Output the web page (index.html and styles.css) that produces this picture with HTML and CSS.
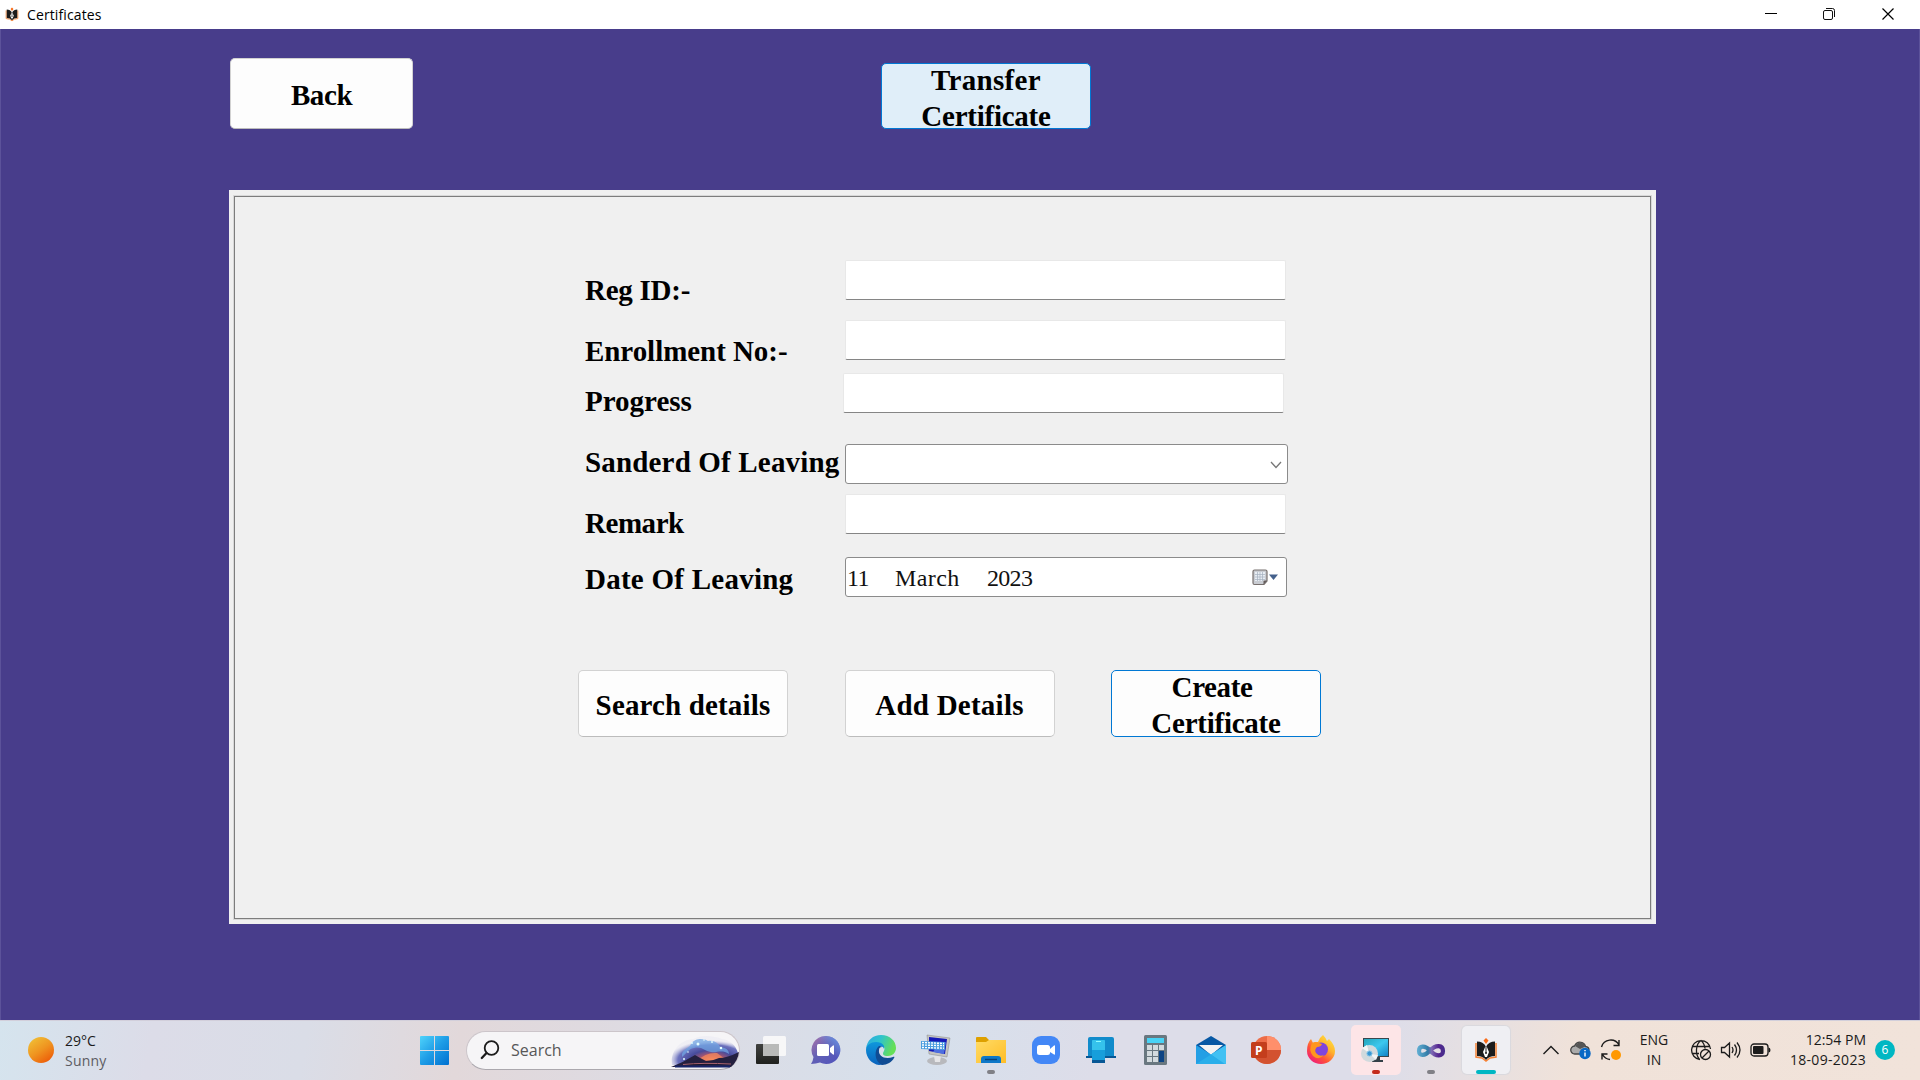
FILE: index.html
```html
<!DOCTYPE html>
<html lang="en">
<head>
<meta charset="utf-8">
<title>Certificates</title>
<link rel="stylesheet" href="styles.css">
</head>
<body>
<header class="titlebar">
  <svg class="app-icon" width="14" height="15" viewBox="0 0 24 24"><use href="#book"/></svg>
  <span class="title">Certificates</span>
  <div class="controls">
    <svg width="58" height="28" viewBox="0 0 58 28"><path d="M23 13.5h12" stroke="#000" stroke-width="1"/></svg>
    <svg width="58" height="28" viewBox="0 0 58 28" fill="none" stroke="#111"><rect x="23.5" y="10.5" width="9" height="9" rx="1.5"/><path d="M26 8.5h6.5a2 2 0 0 1 2 2v6.500"/></svg>
    <svg width="58" height="28" viewBox="0 0 58 28"><path d="M24.500 8.500l11 11M35.500 8.500l-11 11" stroke="#000" stroke-width="1.2"/></svg>
  </div>
</header>

<main class="window">
  <div class="top-buttons">
    <button class="btn back"><span class="t-back">Back</span></button>
    <button class="btn transfer"><span class="t-transfer">Transfer</span><span class="t-cert">Certificate</span></button>
  </div>
  <section class="panel">
    <div class="panel-inner">
      <form class="form">
        <div class="row r-reg"><label class="l-reg">Reg ID:-</label><div class="field"></div></div>
        <div class="row r-enr"><label class="l-enr">Enrollment No:-</label><div class="field"></div></div>
        <div class="row r-pro"><label class="l-pro">Progress</label><div class="field"></div></div>
        <div class="row r-std"><label class="l-std">Sanderd Of Leaving</label><div class="field select">
          <svg width="12" height="8" viewBox="0 0 12 8"><path d="M1 1l5 5.500 5-5.500" fill="none" stroke="#777" stroke-width="1.300"/></svg></div></div>
        <div class="row r-rem"><label class="l-rem">Remark</label><div class="field"></div></div>
        <div class="row r-dat"><label class="l-dat">Date Of Leaving</label><div class="field date">
          <span class="day">11</span><span class="month">March</span><span class="year">2023</span>
          <svg width="26" height="18" viewBox="0 0 26 18"><path d="M2.500 2h11a1.500 1.500 0 0 1 1.500 1.500V13l-3 3.500H2.500A1.500 1.500 0 0 1 1 15V3.500A1.500 1.500 0 0 1 2.500 2z" fill="#c9ccd2" stroke="#77706e" stroke-width="1.200"/><path d="M3 4h10v9H3z" fill="#e8edf3"/><path d="M3 6.500h10M3 9h10M3 11.500h10M5.500 4v9M8 4v9M10.500 4v9" stroke="#a5b0bf" stroke-width=".7"/><path d="M15 12.500l-3.500 4v-4z" fill="#645c5b"/><path d="M17 6.500h9L21.500 12z" fill="#44618c"/></svg></div></div>
      </form>
      <div class="actions">
        <button class="btn"><span class="t-search">Search details</span></button>
        <button class="btn"><span class="t-add">Add Details</span></button>
        <button class="btn create"><span class="t-create">Create</span><span class="t-cert">Certificate</span></button>
      </div>
    </div>
  </section>
</main>

<footer class="taskbar">
  <div class="weather">
    <span class="sun"></span>
    <div><div class="temp">29°C</div><div class="cond">Sunny</div></div>
  </div>
  <svg class="start" width="29" height="29" viewBox="0 0 29 29"><defs><linearGradient id="win" x1="0" y1="0" x2="1" y2="1"><stop offset="0" stop-color="#4fd3fb"/><stop offset=".5" stop-color="#1e9ce6"/><stop offset="1" stop-color="#0070d0"/></linearGradient></defs><path fill="url(#win)" d="M1 0h13v14H0V1a1 1 0 0 1 1-1zM15 0h13a1 1 0 0 1 1 1v13H15zM0 15h14v14H1a1 1 0 0 1-1-1zM15 15h14v13a1 1 0 0 1-1 1H15z"/></svg>
  <div class="search">
    <svg class="lens" width="20" height="20" viewBox="0 0 20 20"><circle cx="11.500" cy="8" r="6.800" fill="none" stroke="#1b1b1b" stroke-width="1.800"/><path d="M6.500 13L1.800 18" stroke="#1b1b1b" stroke-width="2.300" stroke-linecap="round"/></svg>
    <span>Search</span>
    <svg class="scene" width="68" height="34" viewBox="0 0 68 34"><defs>
      <radialGradient id="sky" cx=".6" cy=".8" r=".65"><stop offset="0" stop-color="#ff935b"/><stop offset=".22" stop-color="#bb5867"/><stop offset=".5" stop-color="#474b9b"/><stop offset=".78" stop-color="#6c72be"/><stop offset="1" stop-color="#c8c9e5" stop-opacity=".15"/></radialGradient></defs>
      <path d="M1 31C-1 17 9 6 22 5 31 0 44 2 51 5c9 1 14 7 16 14-1 7-4 10-8 13z" fill="url(#sky)"/><path d="M11 23C10 15 18 15 20 10c5-7 14-5 17-3 8-1 11 4 13 7 4-1 8 2 8 6-7-5-12-1-18-2-7-1-9-6-17-4-6 1-7 5-12 9z" fill="#72a6e3" opacity=".75"/><path d="M26 27q9-9 20-8l8 6z" fill="#f58a5c" opacity=".75"/><path d="M0 33q13-5 24-12 5 3 11 6 7 0 13-3 8 0 20-6-1 9-8 15z" fill="#24203f"/><path d="M12 30.500q20-2 48-.5" stroke="#a96370" stroke-width="1"/><path d="M4 32.500h55" stroke="#172468" stroke-width="2"/><g fill="#e5ffff"><circle cx="27" cy="10" r="1.500"/><circle cx="21" cy="9" r=".9"/><circle cx="33" cy="6" r=".8"/><circle cx="41" cy="8" r=".9"/><circle cx="50" cy="14" r="1.300"/><circle cx="17" cy="18" r=".8"/><circle cx="13" cy="25" r="1"/></g></svg>
  </div>
  <nav class="apps">
    <div class="app"><svg width="32" height="32" viewBox="0 0 32 32"><defs><linearGradient id="tv" x2="0" y2="1"><stop stop-color="#40413f"/><stop offset="1" stop-color="#20211e"/></linearGradient></defs><rect x="1" y="10" width="23" height="20" rx="1" fill="url(#tv)"/><rect x="8" y="2" width="23" height="20" rx="1.500" fill="#fafafa" opacity=".9"/><path d="M8 10h16v12H8z" fill="#b9bab9"/></svg></div>
    <div class="app"><svg width="32" height="32" viewBox="0 0 32 32"><defs><linearGradient id="chat" x2="1" y2="1"><stop stop-color="#b175aa"/><stop offset=".45" stop-color="#6260b5"/><stop offset="1" stop-color="#4f52bd"/></linearGradient><linearGradient id="chatb" x1="1" x2="0" y2="1"><stop stop-color="#699bea"/><stop offset=".45" stop-color="#699bea" stop-opacity="0"/></linearGradient></defs><path d="M16.500 2a14 14 0 1 1-6.500 26.500Q6 29.500 1 30q2-3 2.500-7A14 14 0 0 1 16.500 2z" fill="url(#chat)"/><path d="M16.500 2a14 14 0 1 1-6.500 26.500Q6 29.500 1 30q2-3 2.500-7A14 14 0 0 1 16.500 2z" fill="url(#chatb)"/><rect x="7" y="10" width="12" height="12" rx="1.500" fill="#fff"/><path d="M20 14l3-2.500q1-.5 1 .5v8q0 1-1 .5L20 18z" fill="#fff"/></svg></div>
    <div class="app"><svg width="32" height="32" viewBox="0 0 32 32"><defs><linearGradient id="ea" x2="1" y2=".3"><stop stop-color="#2ba8e3"/><stop offset=".5" stop-color="#2fc3cc"/><stop offset="1" stop-color="#65df57"/></linearGradient><linearGradient id="eb" x2="0" y2="1"><stop stop-color="#0e97dc"/><stop offset="1" stop-color="#0a62bd"/></linearGradient></defs><path d="M1 15C2 6 8 1 16 1c9 0 15 6 15 13 0 5-4 8-8 8-5 0-6-2-4-5 2-4-2-7-6-7C7 9 3 12 1 15z" fill="url(#ea)"/><path d="M1 16c0-5 5-8 10-8 7 0 9 4 8 7-1-3-4-3-5-1-3 6 2 14 9 14-3 2-6 3-9 3C7 30 1 24 1 16z" fill="url(#eb)"/><path d="M14 12c-5 4-5 15 3 19 5 0 10-3 12-7 1-1 0-1.500-1-1-8 3-15-1-14-7 0-2 1-3 3-3-1-1-2-1-3-1z" fill="#104c94"/></svg></div>
    <div class="app"><svg width="32" height="32" viewBox="0 0 32 32"><ellipse cx="17" cy="27" rx="10" ry="4" fill="#b8b9bd"/><path d="M14 22h7l-1 6h-5z" fill="#e5e5e7"/><path d="M7 1l23 3-3 19-18-3z" fill="#c5c5c2" stroke="#888" stroke-width=".5"/><path d="M9 3l18 2-2 15-16-3z" fill="#1419b7"/><path d="M16 13l10-5-2 12-11-2z" fill="#4c6ee0"/><path d="M1 7l24 1v8L1 15z" fill="#4a9ddf"/><path d="M2 8.500l22 1M2 11l22 .7M2 13.500l22 .7" stroke="#fff" stroke-width="1.400" stroke-dasharray="2 1"/></svg></div>
    <div class="app"><svg width="32" height="32" viewBox="0 0 32 32"><defs><linearGradient id="fold" x2="1" y2="1"><stop stop-color="#ffdb66"/><stop offset="1" stop-color="#ffbd26"/></linearGradient></defs><path d="M1 4q0-1 1-1h9l3 3h16q1 0 1 1v6H1z" fill="#dea000"/><path d="M1 8h10l3-2h17v23H1z" fill="url(#fold)"/><path d="M6 29v-4q0-3 3-3h14q3 0 3 3v4z" fill="#0f78c8"/><path d="M10 25.500h12" stroke="#09427a" stroke-width="1.400"/></svg><i class="dot"></i></div>
    <div class="app"><svg width="32" height="32" viewBox="0 0 32 32"><rect x="2" y="2" width="28" height="28" rx="9" fill="#4387f6"/><rect x="7" y="11" width="13" height="10" rx="2.500" fill="#fff"/><path d="M20 15l4-3.500q1-.5 1 .5v8q0 1-1 .5L20 18z" fill="#fff"/></svg></div>
    <div class="app"><svg width="32" height="32" viewBox="0 0 32 32"><path d="M3 5q0-2 2-2h22q2 0 2 2v18H3z" fill="#118bcb"/><path d="M1 22h30v2H1z" fill="#075795"/><rect x="7" y="6" width="13" height="23" rx="1" fill="#179edb"/><path d="M7 7q0-1 1-1h11q1 0 1 1v9H7z" fill="#35c2ec"/><path d="M7 26h13v3H7z" fill="#075795"/><path d="M11 7.500h5" stroke="#8efaff"/></svg></div>
    <div class="app"><svg width="32" height="32" viewBox="0 0 32 32"><rect x="4" y="1" width="23" height="30" rx="1.500" fill="#697780"/><rect x="7" y="4" width="17" height="5" fill="#48d3f6"/><g fill="#d3dade"><path d="M7 11h5v5H7zM13 11h5v5h-5zM19 11h5v5h-5zM7 17h5v5H7zM13 17h5v5h-5zM7 23h5v5H7zM13 23h5v5h-5z"/></g><path d="M19 17h5v11h-5z" fill="#0d4484"/></svg></div>
    <div class="app"><svg width="32" height="32" viewBox="0 0 32 32"><path d="M1 11L16 2l15 9v9H1z" fill="#0758a4"/><path d="M4 11h24L16 21z" fill="#f3f3f3"/><path d="M1 11l15 9.500L31 11v19H1z" fill="#239fe5"/><path d="M31 11L16 20.500 28 30h3z" fill="#42c1f3"/><path d="M1 30l15-9.500L30 30z" fill="#2aaeea"/></svg></div>
    <div class="app"><svg width="32" height="32" viewBox="0 0 32 32"><circle cx="17" cy="16" r="14" fill="#ed6c47"/><path d="M17 2a14 14 0 0 1 14 14H17z" fill="#ff8f6b"/><path d="M3 16h28a14 14 0 0 1-28 0z" fill="#d35230"/><rect x="1" y="8" width="16" height="16" rx="1.500" fill="#c43e1c"/><text x="5" y="20.500" class="ppt">P</text></svg></div>
    <div class="app"><svg width="32" height="32" viewBox="0 0 32 32"><defs><linearGradient id="ff" x1="1" x2=".2" y2="1"><stop stop-color="#fff04a"/><stop offset=".4" stop-color="#ffb52c"/><stop offset=".7" stop-color="#ff5238"/><stop offset="1" stop-color="#ed1881"/></linearGradient></defs><path d="M18 1q3 3 4 6l2-2q6 6 6 12a14 13 0 0 1-28 0Q2 9 6 5l2 4q3-1 5-1 2-5 5-7z" fill="url(#ff)"/><circle cx="16" cy="15.500" r="7" fill="#8045dc"/><path d="M7 9q4-2 7 0l3 1q-1 3-5 3-3 3-1 6 3 4 8 2-5 6-11 1Q3 16 7 9z" fill="#ff961e"/></svg></div>
    <div class="app alert"><svg width="32" height="32" viewBox="0 0 32 32"><defs><linearGradient id="pc" x2="1" y2="1"><stop stop-color="#24a6bb"/><stop offset=".5" stop-color="#3cc8ee"/><stop offset="1" stop-color="#1383c7"/></linearGradient></defs><path d="M3 4h26v19H3z" fill="#39464d"/><path d="M4 5h24v17H4z" fill="url(#pc)"/><path d="M14 23h6v3h3v2H12v-2h2z" fill="#344047"/><circle cx="9.500" cy="19.500" r="8.500" fill="#d1dadd"/><path d="M9 19l-7-5 5-3zM10 20l6 6 2-5z" fill="#f4f6f6"/><circle cx="9.500" cy="19.500" r="2.600" fill="#3b98d2" stroke="#87c6e8"/></svg><i class="dot red"></i></div>
    <div class="app"><svg width="32" height="32" viewBox="0 0 32 32"><defs><linearGradient id="vs" gradientUnits="userSpaceOnUse" x1="1" x2="31" y1="0" y2="0"><stop stop-color="#67b5d9"/><stop offset=".4" stop-color="#327ba6"/><stop offset=".52" stop-color="#7e69b4"/><stop offset=".75" stop-color="#54258f"/><stop offset="1" stop-color="#44308c"/></linearGradient></defs><path d="M4 17c0-5.500 6-6 11-.5 6 6.500 13 6.500 13 .5s-7-7-13-.5c-5 5.500-11 6-11 .5z" fill="none" stroke="url(#vs)" stroke-width="4.200"/></svg><i class="dot"></i></div>
    <div class="app active"><svg width="24" height="24" viewBox="0 0 24 24"><g id="book"><path d="M2 5v14l6 1 4 3 4-3 6-1V5" fill="none" stroke="#f58235" stroke-width="1.500"/><path d="M3 3.500q6 0 9 5 3-5 9-5V18q-6 0-9 4-3-4-9-4z" fill="#1c1c1c"/><path d="M12 7l3 7-2 5h-2l-2-5z" fill="#fff"/><path d="M12 8v7" stroke="#222"/><circle cx="12" cy="15" r="1" fill="#222"/><path d="M12 0l2.500 2.500L12 6 9.500 2.500z" fill="#f96b16"/></g></svg><i class="dot teal"></i></div>
  </nav>
  <div class="tray">
    <svg class="chev" width="18" height="12" viewBox="0 0 18 12"><path d="M1.500 10L9 2.500l7.500 7.500" fill="none" stroke="#1b1b1b" stroke-width="1.400"/></svg>
    <svg class="cloud" width="21" height="20" viewBox="0 0 21 20"><path d="M5 14a4 4 0 0 1-.5-8Q7 1 12 2.500q3 1 3.500 4Q19 7 19 10l-6 4z" fill="#aaa" stroke="#444" stroke-width="1.300"/><path d="M5 6Q7 2 11 2.500q4 1 4.500 4L10 9z" fill="#555"/><circle cx="15" cy="13.500" r="5.700" fill="#0868c5"/><path d="M15 12.500v4M15 10v1.300" stroke="#fff" stroke-width="1.400"/></svg>
    <svg class="sync" width="22" height="22" viewBox="0 0 22 22"><path d="M1.500 8A9.500 9.500 0 0 1 19 6M19 1v5.500h-5.500M10 20.500Q5 20 2.500 15.500M2 20.500V15h5.500" fill="none" stroke="#1b1b1b" stroke-width="1.400"/><circle cx="16" cy="16" r="5" fill="#ff9800"/></svg>
    <div class="lang"><span>ENG</span><span>IN</span></div>
    <svg class="globe" width="22" height="22" viewBox="0 0 22 22" fill="none" stroke="#1b1b1b" stroke-width="1.300"><path d="M10 20.500A9.500 9.500 0 1 1 20.500 10M1.800 7.500h17.500M1.800 14.500H9M9.500 20.500Q6 16 6.500 10.500 7 4 11 1.500q3.500 3 4 8"/><circle cx="15.500" cy="15.500" r="5"/><path d="M12 19l7-7"/></svg>
    <svg class="speaker" width="22" height="18" viewBox="0 0 22 18" fill="none" stroke="#1b1b1b" stroke-width="1.300"><path d="M1.500 6.500h3l5-4.500v14l-5-4.500h-3zM12 6q2 3 0 6M14.500 3.500q4 5.500 0 11M17 1.500q6 7.500 0 15"/></svg>
    <svg class="battery" width="22" height="14" viewBox="0 0 22 14"><rect x="1" y="1" width="17" height="12" rx="3" fill="none" stroke="#1b1b1b" stroke-width="1.300"/><rect x="3" y="3" width="10.500" height="8" rx="1" fill="#1b1b1b"/><path d="M18.500 4.500q2 0 2 2.500t-2 2.500z" fill="#1b1b1b"/></svg>
    <div class="clock"><span class="time">12:54 PM</span><span class="day-date">18-09-2023</span></div>
    <span class="badge">6</span>
  </div>
</footer>
</body>
</html>
```
FILE: styles.css
```css
* { box-sizing: border-box; }
body { margin: 0; width: 1920px; height: 1080px; overflow: hidden; display: flex; flex-direction: column; background: #483d8b; font-family: "Open Sans", sans-serif; }
svg { display: block; flex: none; }

.titlebar { height: 29px; background: #fff; display: flex; align-items: flex-start; flex: none; padding-left: 5px; }
.app-icon { margin-top: 7px; }
.title { margin-left: 8px; font-size: 14px; line-height: 29px; color: #000; letter-spacing: .12px; }
.controls { margin-left: auto; display: flex; padding-right: 4px; }

.window { flex: 1; background: #483d8b; border-left: 1px solid #5c529a; border-right: 1px solid #5c529a; }
.top-buttons { display: flex; align-items: flex-start; padding: 29px 0 0 229px; height: 161px; }
.btn { font: bold 29px/36px "Liberation Serif", serif; color: #000; background: #fdfdfd; border: 1px solid #d2d2d2; border-bottom-color: #bcbcbc; border-radius: 5px; padding: 3px 0 0; width: 210px; height: 67px; display: flex; flex-direction: column; align-items: center; justify-content: center; overflow: hidden; white-space: nowrap; }
.btn span { flex: none; }
.btn.back { width: 183px; height: 71px; }
.btn.transfer { margin: 5px 0 0 468px; background: #e0eef9; border: 1px solid #0078d4; height: 66px; }
.btn.create { border: 1px solid #0078d4; }
.t-back { letter-spacing: -.4px; }
.t-transfer { letter-spacing: .3px; }
.t-cert { letter-spacing: -.25px; }
.t-search { letter-spacing: .15px; }
.t-add { letter-spacing: .25px; }
.t-create { letter-spacing: -.4px; margin-right: 8px; }

.panel { margin-left: 228px; width: 1427px; height: 734px; background: #f0f0f0; padding: 6px 5px 5px; }
.panel-inner { width: 1417px; height: 723px; border: 1px solid #7d7d7d; box-shadow: 0 0 0 1px #d8d8d8; }
.form { padding: 63px 0 0 350px; display: flex; flex-direction: column; }
.row { display: flex; height: 40px; }
.row label { width: 260px; flex: none; font: bold 29px/40px "Liberation Serif", serif; color: #000; white-space: nowrap; padding-top: 10px; }
.field { width: 441px; height: 40px; background: #fff; border: 1px solid #e8e8e8; border-bottom: 1px solid #858585; border-radius: 2px; flex: none; }
.r-enr { margin-top: 20px; }
.r-pro { margin-top: 13px; }
.r-std { margin-top: 31px; }
.r-rem { margin-top: 10px; }
.r-dat { margin-top: 23px; }
.row .l-reg { letter-spacing: -.25px; }
.row .l-enr { letter-spacing: -.05px; padding-top: 11px; }
.row .l-pro { width: 258px; padding-top: 8px; }
.row .l-std { letter-spacing: .17px; padding-top: 0; margin-top: -2px; }
.row .l-rem { letter-spacing: -.45px; padding-top: 9px; }
.row .l-dat { letter-spacing: .25px; padding-top: 2px; }
.field.select, .field.date { width: 442px; height: 40px; border: 1px solid #8b8b8b; border-radius: 3px; display: flex; align-items: center; }
.field.select { width: 443px; }
.select svg { margin-left: auto; margin-right: 5px; margin-top: 1px; }
.field.date { font: 24px/38px "Liberation Serif", serif; color: #111; padding-top: 1px; }
.date svg { margin-top: -1px; }
.day { width: 49px; padding-left: 1px; letter-spacing: -.6px; }
.month { width: 92px; letter-spacing: .4px; }
.year { letter-spacing: -.7px; }
.date svg { margin-left: auto; margin-right: 8px; }
.actions { display: flex; padding: 73px 0 0 343px; gap: 56.500px; }

.taskbar { height: 60px; flex: none; display: flex; background: linear-gradient(100deg, #d5e4ee 0, #dcdce8 8%, #dadde7 16%, #e2d8da 24%, #dddbe3 34%, #d6e0ec 48%, #dddde9 57%, #dddde9 72%, #f0e2d9 82%, #f1e3da 100%); border-top: 1px solid #d2cfdb; }
.weather { width: 420px; display: flex; padding: 10px 0 0 28px; font-size: 14px; line-height: 20px; flex: none; }
.sun { width: 26px; height: 26px; border-radius: 50%; background: linear-gradient(145deg, #f0bd35 10%, #ef9420 50%, #ed620b 85%); margin: 6px 11px 0 0; }
.temp { color: #1b1b1b; }
.cond { color: #5c5c62; letter-spacing: .2px; }
.start { margin-top: 15px; }
.search { margin: 10px 0 0 17px; width: 274px; height: 39px; border-radius: 20px; background: #f6f5f7; border: 1px solid #ccc5ca; border-bottom-color: #aba8ae; display: flex; align-items: center; padding: 0 0 2px 13px; font-size: 16px; color: #575757; flex: none; }
.search span { margin-left: 11px; width: 160px; }
.scene { margin-top: 3px; }
.apps { display: flex; margin-left: 3px; flex: none; }
.app { width: 55px; height: 59px; display: flex; align-items: center; justify-content: center; position: relative; padding-bottom: 2px; }
.dot { position: absolute; bottom: 6px; left: 23.500px; width: 8px; height: 4px; border-radius: 2px; background: #808086; }
.alert { width: 50px; height: 50px; margin: 4px 2.500px 0; border-radius: 5px; background: #fde5e7; padding-bottom: 0; }
.alert .dot { left: 21px; }
.dot.red { background: #c42b1c; bottom: 1px; }
.active { width: 48px; height: 48px; margin: 5px 3.500px 0; border-radius: 5px; background: #efeff3; box-shadow: 0 0 1px 1px #d9d9de; padding-bottom: 1px; }
.dot.teal { width: 20px; left: 14px; bottom: 0; background: #00b7c3; }
.ppt { font: bold 12px "Open Sans", sans-serif; fill: #fff; }
.tray { display: flex; align-items: center; margin-left: 29px; padding-bottom: 2px; color: #1b1b1b; font-size: 14px; line-height: 20px; flex: 1; }
.cloud { margin-left: 10px; }
.sync { margin-left: 9px; }
.lang { width: 40px; margin-left: 12px; display: flex; flex-direction: column; align-items: center; }
.globe { margin-left: 16px; }
.speaker { margin-left: 8px; }
.battery { margin-left: 8px; }
.clock { width: 94px; display: flex; flex-direction: column; align-items: flex-end; white-space: nowrap; }
.day-date { letter-spacing: .3px; }
.badge { width: 20px; height: 20px; margin-left: 9px; border-radius: 50%; background: #00b7c3; color: #fff; font-size: 12px; line-height: 20px; text-align: center; }
```
